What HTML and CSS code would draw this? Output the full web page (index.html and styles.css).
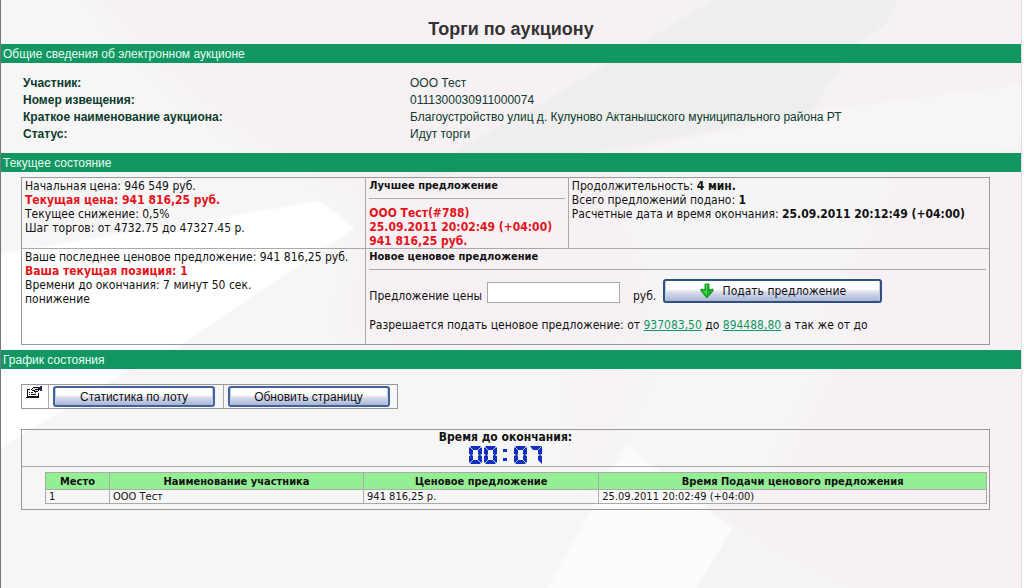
FILE: index.html
```
<!DOCTYPE html>
<html lang="ru">
<head>
<meta charset="utf-8">
<title>Торги по аукциону</title>
<link rel="stylesheet" href="styles.css">
</head>
<body>
<div class="page">
  <svg class="backdrop" viewBox="0 0 1024 588" preserveAspectRatio="none" aria-hidden="true">
    <defs>
      <filter id="soft"><feGaussianBlur stdDeviation="8"/></filter>
      <filter id="edge"><feGaussianBlur stdDeviation="1"/></filter>
    </defs>
    <rect width="1024" height="588" fill="#f6f6f6"/>
    <g filter="url(#soft)">
      <path d="M80 -30H1060V620H880L700 510L780 470L830 369L860 320L800 345L400 350L340 330L365 200L260 150Q120 60 80 -30Z" fill="#f7f1f5"/>
      <path d="M620 170H900L860 250L800 340H660Z" fill="#f6f5f6"/>
      <path d="M570 369H650L615 440L580 500Z" fill="#f7f2f6"/>
    </g>
    <g filter="url(#edge)">
      <path d="M714 0H900Q895 25 862 42Q835 75 815 112L720 130L610 150L400 180L545 102Z" fill="#eeeeee"/>
      <path d="M815 112L1030 84V140L1000 152H640Z" fill="#f7f6f7"/>
      <path d="M-9 255L320 201L355 228L180 345L130 369L-9 453Z" fill="#ffffff"/>
      <path d="M628 445L734 529L696 592H547Z" fill="#fdfcfd"/>
      <path d="M734 529L860 592H696Z" fill="#f4f4f4"/>
    </g>
  </svg>

  <h1 class="title">Торги по аукциону</h1>

  <h2 class="bar">Общие сведения об электронном аукционе</h2>
  <dl class="info">
    <dt>Участник:</dt><dd>ООО Тест</dd>
    <dt>Номер извещения:</dt><dd>0111300030911000074</dd>
    <dt>Краткое наименование аукциона:</dt><dd>Благоустройство улиц д. Кулуново Актанышского муниципального района РТ</dd>
    <dt>Статус:</dt><dd>Идут торги</dd>
  </dl>

  <h2 class="bar">Текущее состояние</h2>
  <div class="state">
    <div class="cell">
      <p>Начальная цена: 946 549 руб.</p>
      <p class="hot">Текущая цена: 941 816,25 руб.</p>
      <p>Текущее снижение: 0,5%</p>
      <p>Шаг торгов: от 4732.75 до 47327.45 р.</p>
    </div>
    <div class="cell">
      <h3 class="caption">Лучшее предложение</h3>
      <p class="hot">ООО Тест(#788)</p>
      <p class="hot">25.09.2011 20:02:49 (+04:00)</p>
      <p class="hot">941 816,25 руб.</p>
    </div>
    <div class="cell">
      <p>Продолжительность: <b>4 мин.</b></p>
      <p>Всего предложений подано: <b>1</b></p>
      <p>Расчетные дата и время окончания: <b>25.09.2011 20:12:49 (+04:00)</b></p>
    </div>
    <div class="cell lower">
      <p>Ваше последнее ценовое предложение: 941 816,25 руб.</p>
      <p class="hot">Ваша текущая позиция: 1</p>
      <p>Времени до окончания: 7 минут 50 сек.</p>
      <p>понижение</p>
    </div>
    <div class="cell lower wide">
      <h3 class="caption">Новое ценовое предложение</h3>
      <form class="offer">
        <label for="price">Предложение цены</label>
        <input class="price" id="price" type="text">
        <span class="unit">руб.</span>
        <button class="button submit" type="button">
          <svg class="arrow" viewBox="0 0 14 16" aria-hidden="true"><path d="M5 1H9V7L13 6V8L7 15L1 8V6L5 7Z" fill="#18b022" stroke="#149a20"/><path d="M6 1H7V12L3 8H6Z" fill="#4fd653"/></svg>
          Подать предложение
        </button>
      </form>
      <p>Разрешается подать ценовое предложение: от <a href="#price">937083,50</a> до <a href="#price">894488,80</a> а так же от до</p>
    </div>
  </div>

  <h2 class="bar">График состояния</h2>
  <div class="tools">
    <div class="tool icon">
      <svg class="props" viewBox="0 0 16 12" aria-hidden="true" shape-rendering="crispEdges">
        <path d="M1 4H12V11H1Z" fill="#fff"/>
        <path d="M1 3H4V4H2V10H12V7H13V11H1ZM0 11H13V12H0Z" fill="#111"/>
        <path d="M3 6H4V7H3ZM5 6H7V7H5ZM3 8H4V9H3ZM5 8H10V9H5Z" fill="#111"/>
        <path d="M5 3H6V2H7V1H13V5H12V6H10V7H9V6H8V5H6V4H5Z" fill="#111"/>
        <path d="M6 3H7V2H12V3H9V4H12V5H9V4H6Z" fill="#d8d4e0"/>
        <path d="M13 1H14V0H16V5H14V4H13Z" fill="#28285a"/>
      </svg>
    </div>
    <div class="tool"><button class="button" type="button">Статистика по лоту</button></div>
    <div class="tool"><button class="button" type="button">Обновить страницу</button></div>
  </div>

  <div class="chart">
    <div class="timer">
      <div>Время до окончания:</div>
      <svg class="clock" viewBox="0 0 74 18" role="img" aria-label="00:07">
        <defs>
          <g id="zero">
            <path d="M2 0H11L13 2V8L11 9L13 10V16L11 18H2L0 16V10L2 9L0 8V2ZM4 4V8L3 9L4 10V14H9V10L10 9L9 8V4Z" fill-rule="evenodd"/>
            <path d="M1 1L4 4M12 1L9 4M1 17L4 14M12 17L9 14" stroke="#b8c4f4"/>
          </g>
        </defs>
        <g fill="#1230c0">
          <use href="#zero"/><use href="#zero" x="15"/>
          <path d="M34 3h4v3h-4zM34 12h4v3h-4z"/>
          <use href="#zero" x="45"/>
          <path d="M61 0H72L73 1V8L71 9L69 8V4H64ZM69 10L71 9L73 10V18L69 14Z"/>
          <path d="M72 1L69 4" stroke="#b8c4f4"/>
        </g>
      </svg>
    </div>
    <div class="bids-wrap">
      <table class="bids">
        <thead><tr><th class="place">Место</th><th class="name">Наименование участника</th><th class="sum">Ценовое предложение</th><th>Время Подачи ценового предложения</th></tr></thead>
        <tbody><tr><td>1</td><td>ООО Тест</td><td>941 816,25 р.</td><td>25.09.2011 20:02:49 (+04:00)</td></tr></tbody>
      </table>
    </div>
  </div>
</div>
</body>
</html>
```
FILE: styles.css
```
* { box-sizing: border-box; }
body {
  margin: 0;
  background: #fcfcfc;
  color: #111;
  font: 12px/14px "DejaVu Sans Condensed", "DejaVu Sans", sans-serif;
}
p, h1, h2, h3, dl, dd { margin: 0; }
.page {
  position: relative;
  min-height: 100vh;
  margin-right: 2px;
  border-left: 1px solid #777;
  border-right: 1px solid #ddd;
}
.backdrop { position: absolute; inset: 0; width: 100%; height: 100%; z-index: -1; }
.title {
  padding: 18px 0 4px;
  color: #333;
  font: bold 18px/22px "Liberation Sans", Arial, sans-serif;
  text-align: center;
}
.bar {
  padding: 1px 2px 0;
  background: #129662;
  color: #e6fff2;
  font: 12px/18px "Liberation Sans", Arial, sans-serif;
}
.info {
  display: grid;
  grid-template-columns: 387fr 589fr;
  padding: 12px 22px 10px;
  color: #0c3a2c;
  font: 12px/17px "Liberation Sans", Arial, sans-serif;
}
.info dt { font-weight: bold; }
.state {
  display: grid;
  grid-template-columns: 344fr 203fr 422fr;
  margin: 5px 31px 5px 20px;
  border: 1px solid #999;
}
.cell { padding: 1px 3px 0; border-left: 1px solid #aaa; white-space: nowrap; }
.cell:first-child, .cell.lower { border-left: 0; }
.lower { border-top: 1px solid #aaa; min-height: 96px; }
.cell.wide { grid-column: span 2; border-left: 1px solid #aaa; }
.hot { color: #e5141a; font-weight: bold; }
.caption {
  margin-bottom: 7px;
  padding-bottom: 5px;
  border-bottom: 1px solid #aaa;
  font-size: 11px;
  line-height: 14px;
}
.offer { display: flex; align-items: flex-end; margin-bottom: 15px; padding-top: 2px; }
.price { width: 133px; height: 21px; margin: 0 13px 0 5px; border: 1px solid #aaa; background: #fff; }
.button {
  display: flex;
  align-items: center;
  justify-content: center;
  width: 162px;
  height: 21px;
  padding: 0;
  border: 2px solid #3f639a;
  border-radius: 3px;
  background: linear-gradient(#fff 40%, #d9dded 55%, #a9b6d6);
  box-shadow: inset 1px 0 #c5cfe4, inset -1px 0 #c5cfe4;
  color: #111;
  font: 12px/14px "Liberation Sans", Arial, sans-serif;
}
.submit {
  width: 219px;
  height: 24px;
  margin-left: 7px;
  gap: 9px;
  border-color: #2f5082;
  font-family: "DejaVu Sans Condensed", "DejaVu Sans", sans-serif;
}
.arrow { width: 14px; height: 16px; }
a { color: #129662; }
.tools { display: flex; width: 377px; margin: 15px 20px 20px; border: 1px solid #999; }
.tool { flex: 1; padding: 1px 4px; border-left: 1px solid #aaa; }
.tool.icon { flex: none; width: 26px; border-left: 0; }
.props { display: block; width: 16px; height: 12px; }
.chart { margin: 0 31px 0 20px; border: 1px solid #999; }
.timer { height: 37px; border-bottom: 1px solid #aaa; font-weight: bold; text-align: center; }
.clock { display: block; width: 74px; height: 18px; margin: 2px auto; }
.bids-wrap { padding: 5px 2px 5px 23px; }
.bids { width: 100%; border: 1px solid #999; border-collapse: collapse; table-layout: fixed; font-size: 11px; line-height: 13px; }
.bids th, .bids td { padding: 0 3px; border: 1px solid #aaa; }
.bids th { height: 17px; background: #94ef94; }
.bids td { text-align: left; }
.place { width: 64px; }
.name { width: 27%; }
.sum { width: 25%; }
```
